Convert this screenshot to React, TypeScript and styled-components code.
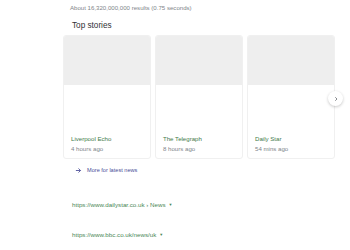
import React from 'react';
import styled, { createGlobalStyle } from 'styled-components';

const GlobalStyle = createGlobalStyle`
  html, body {
    margin: 0;
    padding: 0;
    background: #ffffff;
    font-family: "Liberation Sans", Arial, sans-serif;
  }
`;

const Page = styled.div`
  width: 350px;
  height: 250px;
  overflow: hidden;
  padding-left: 63px;
  box-sizing: border-box;
`;

const Stats = styled.div`
  padding-left: 7px;
  height: 16px;
  line-height: 16px;
  font-size: 6.1px;
  color: #80858a;
`;

const Heading = styled.h3`
  margin: 0;
  padding-left: 9px;
  height: 19px;
  line-height: 19px;
  font-size: 8.2px;
  font-weight: 400;
  color: #303134;
`;

const Carousel = styled.div`
  position: relative;
  display: flex;
  gap: 4px;
  width: 273px;
`;

const Card = styled.div`
  width: 88px;
  height: 124px;
  box-sizing: border-box;
  border: 1px solid #f0f0f0;
  border-radius: 3px;
  overflow: hidden;
  display: flex;
  flex-direction: column;
  background: #fff;
`;

const Thumb = styled.div`
  height: 49px;
  background: #eeeeee;
`;

const CardBody = styled.div`
  flex: 1;
  display: flex;
  flex-direction: column;
  justify-content: flex-end;
  padding: 0 7px 4px;
`;

const Source = styled.div`
  font-size: 6.1px;
  line-height: 10px;
  color: #3f7a4a;
`;

const Age = styled.div`
  font-size: 6.1px;
  line-height: 10px;
  color: #80858a;
`;

const NextButton = styled.div`
  position: absolute;
  right: -7px;
  top: 56px;
  width: 15px;
  height: 15px;
  border-radius: 50%;
  background: #fff;
  box-shadow: 0 1px 3px rgba(0, 0, 0, 0.22);
  display: flex;
  align-items: center;
  justify-content: center;
`;

const MoreLink = styled.div`
  display: flex;
  align-items: center;
  gap: 5px;
  padding-left: 12px;
  margin-top: 5px;
  height: 12px;
  font-size: 5.6px;
  color: #4a4d98;
`;

const Url = styled.div<{ $top: number }>`
  margin-top: ${({ $top }) => $top}px;
  padding-left: 9px;
  height: 10px;
  line-height: 10px;
  font-size: 6.2px;
  color: #4a8756;
`;

const Caret = styled.span`
  font-size: 4px;
  margin-left: 3px;
  vertical-align: 1px;
`;

const stories = [
  { source: 'Liverpool Echo', age: '4 hours ago' },
  { source: 'The Telegraph', age: '8 hours ago' },
  { source: 'Daily Star', age: '54 mins ago' },
];

export default function App() {
  return (
    <>
      <GlobalStyle />
      <Page>
        <Stats>About 16,320,000,000 results (0.75 seconds)</Stats>
        <Heading>Top stories</Heading>
        <Carousel>
          {stories.map((s) => (
            <Card key={s.source}>
              <Thumb />
              <CardBody>
                <Source>{s.source}</Source>
                <Age>{s.age}</Age>
              </CardBody>
            </Card>
          ))}
          <NextButton>
            <svg width="6" height="6" viewBox="0 0 24 24">
              <path d="M9 5l7 7-7 7" fill="none" stroke="#5f6368" strokeWidth="3" />
            </svg>
          </NextButton>
        </Carousel>
        <MoreLink>
          <svg width="7" height="7" viewBox="0 0 24 24">
            <path d="M3 12h16M12 5l7 7-7 7" fill="none" stroke="#4a4d98" strokeWidth="3" />
          </svg>
          More for latest news
        </MoreLink>
        <Url $top={24}>
          https://www.dailystar.co.uk › News<Caret>▼</Caret>
        </Url>
        <Url $top={20}>
          https://www.bbc.co.uk/news/uk<Caret>▼</Caret>
        </Url>
      </Page>
    </>
  );
}
